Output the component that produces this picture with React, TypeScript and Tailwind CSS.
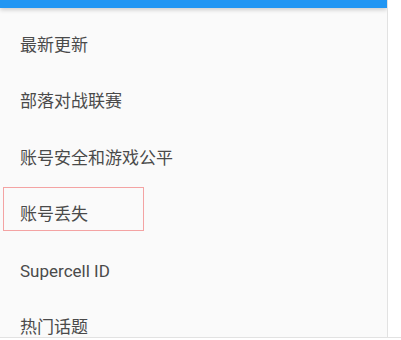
const items = ["最新更新", "部落对战联赛", "账号安全和游戏公平", "账号丢失", "Supercell ID", "热门话题"]

export default function App() {
  return (
    <div className="h-[340px] w-[401px] overflow-hidden bg-white">
      <div className="h-[338px] border-b border-[#e2e2e2]">
        <div className="relative h-full w-[388px] overflow-hidden border-r border-[#e2e2e2] bg-[#fafafa]">
          <div className="relative z-10 h-2 bg-[#2196f3] shadow-[0_2px_4px_rgba(0,0,0,0.18)]" />
          <ul className="pt-[9px]">
            {items.map((item) => (
              <li
                key={item}
                className="flex h-[56.5px] items-center pl-5 text-[17px] text-[#4a4a4a]"
                style={{ fontFamily: '"Roboto", "Noto Sans CJK SC", sans-serif' }}
              >
                {item}
              </li>
            ))}
          </ul>
          {/* highlight annotation */}
          <div className="absolute left-[3px] top-[187px] h-[44px] w-[141px] border border-[#f4a3a3]" />
        </div>
      </div>
    </div>
  )
}
